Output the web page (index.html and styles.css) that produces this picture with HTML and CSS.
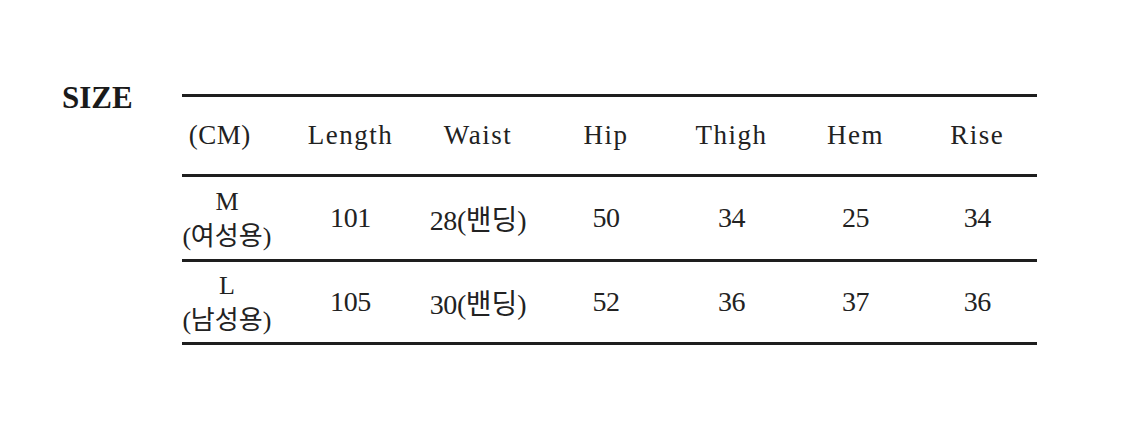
FILE: index.html
```html
<!DOCTYPE html>
<html lang="ko">
<head>
<meta charset="utf-8">
<title>SIZE</title>
<link rel="stylesheet" href="styles.css">
</head>
<body>
<div class="page">
  <div class="title">SIZE</div>
  <div class="table">
    <div class="row head">
      <div class="cell first">(CM)</div>
      <div class="cell">Length</div>
      <div class="cell">Waist</div>
      <div class="cell">Hip</div>
      <div class="cell">Thigh</div>
      <div class="cell">Hem</div>
      <div class="cell">Rise</div>
    </div>
    <div class="row r1">
      <div class="cell first two"><span class="size">M</span><span class="sub">(<span class="ko">여성용</span>)</span></div>
      <div class="cell">101</div>
      <div class="cell">28(<span class="ko">밴딩</span>)</div>
      <div class="cell">50</div>
      <div class="cell">34</div>
      <div class="cell">25</div>
      <div class="cell">34</div>
    </div>
    <div class="row r2">
      <div class="cell first two"><span class="size">L</span><span class="sub">(<span class="ko">남성용</span>)</span></div>
      <div class="cell">105</div>
      <div class="cell">30(<span class="ko">밴딩</span>)</div>
      <div class="cell">52</div>
      <div class="cell">36</div>
      <div class="cell">37</div>
      <div class="cell">36</div>
    </div>
  </div>
</div>
</body>
</html>
```

FILE: styles.css
```css
html, body {
  margin: 0;
  padding: 0;
  background: #ffffff;
}
body {
  width: 1125px;
  height: 444px;
  overflow: hidden;
  font-family: "Liberation Serif", "Noto Sans CJK KR", serif;
  color: #222222;
}
.page {
  display: flex;
  align-items: flex-start;
  padding: 82px 0 0 62px;
}
.title {
  width: 120px;
  font-weight: bold;
  font-size: 31px;
  line-height: 31px;
  color: #1a1a1a;
}
.table {
  margin-top: 12px;
  width: 855px;
  border-top: 3px solid #1e1e1e;
}
.row {
  display: grid;
  grid-template-columns: 105.5px 126px 129px 127px 124px 124px 119.5px;
  align-items: center;
  border-bottom: 3px solid #1e1e1e;
}
.head { height: 77px; font-size: 27px; letter-spacing: 1.5px; }
.r1 { height: 82px; font-size: 28px; letter-spacing: -0.4px; }
.r2 { height: 80px; font-size: 28px; letter-spacing: -0.4px; }
.cell {
  text-align: center;
  white-space: nowrap;
}
.ko {
  font-family: "Noto Sans CJK KR", sans-serif;
  font-size: 28px;
  letter-spacing: 0;
}
.first {
  padding-right: 16px;
}
.head .first { padding-right: 30px; letter-spacing: 0.5px; }
.two {
  display: flex;
  flex-direction: column;
  align-items: center;
  font-size: 26px;
  margin-top: 7px;
}
.two .size { line-height: 26px; }
.two .sub { line-height: 37px; }
.two .ko { font-size: 26px; }
```
